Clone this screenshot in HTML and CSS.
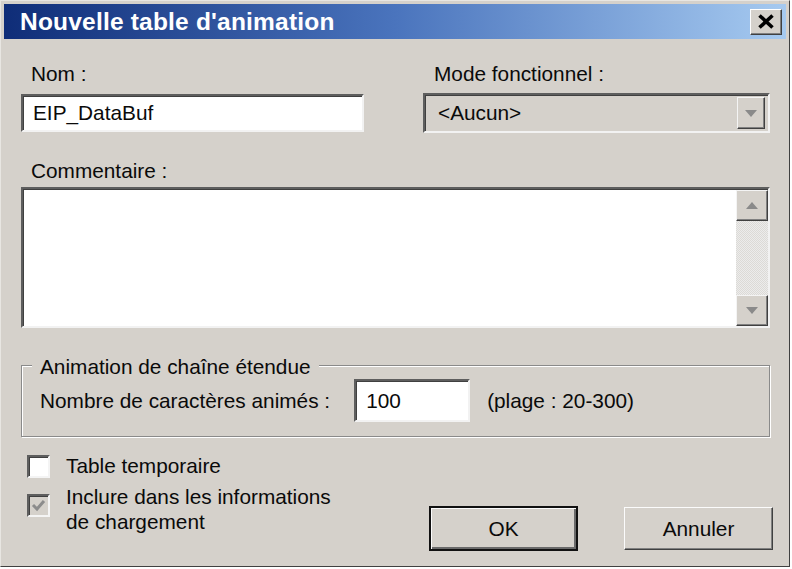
FILE: index.html
```html
<!DOCTYPE html>
<html lang="fr">
<head>
    <meta charset="UTF-8">
    <title>Nouvelle table d'animation</title>
    <link rel="stylesheet" href="styles.css">
</head>
<body>

<div class="dialog">
    <div class="titlebar">
        <span class="title">Nouvelle table d'animation</span>
        <button class="close">
            <svg width="18" height="15" viewBox="0 0 18 15">
                <path d="M2.5 1.5 L15.5 13.5 M15.5 1.5 L2.5 13.5" stroke="#000" stroke-width="3.6" fill="none"/>
            </svg>
        </button>
    </div>

    <div class="content">
        <div class="top-row">
            <div class="field">
                <label class="label">Nom :</label>
                <div class="textbox">EIP_DataBuf</div>
            </div>
            <div class="field">
                <label class="label">Mode fonctionnel :</label>
                <div class="combo">
                    <span class="combo-text">&lt;Aucun&gt;</span>
                    <span class="combo-btn">
                        <svg width="12" height="7" viewBox="0 0 12 7"><polygon points="0,0 12,0 6,7" fill="#8a8a8a"/></svg>
                    </span>
                </div>
            </div>
        </div>

        <div class="field comment">
            <label class="label">Commentaire :</label>
            <div class="memo">
                <div class="memo-text"></div>
                <div class="scrollbar">
                    <span class="scroll-btn">
                        <svg width="12" height="7" viewBox="0 0 12 7"><polygon points="0,7 12,7 6,0" fill="#8a8a8a"/></svg>
                    </span>
                    <span class="scroll-track"></span>
                    <span class="scroll-btn">
                        <svg width="12" height="7" viewBox="0 0 12 7"><polygon points="0,0 12,0 6,7" fill="#8a8a8a"/></svg>
                    </span>
                </div>
            </div>
        </div>

        <fieldset class="group">
            <legend>Animation de chaîne étendue</legend>
            <div class="group-row">
                <span>Nombre de caractères animés :</span>
                <div class="textbox count">100</div>
                <span>(plage : 20-300)</span>
            </div>
        </fieldset>

        <div class="bottom">
            <div class="checks">
                <div class="check-row">
                    <span class="checkbox"></span>
                    <span>Table temporaire</span>
                </div>
                <div class="check-row top">
                    <span class="checkbox disabled">
                        <svg width="15" height="13" viewBox="0 0 15 13"><path d="M2 6 L6 10 L13 2" stroke="#8c8c8c" stroke-width="3" fill="none"/></svg>
                    </span>
                    <span>Inclure dans les informations<br>de chargement</span>
                </div>
            </div>
            <div class="buttons">
                <button class="btn default">OK</button>
                <button class="btn">Annuler</button>
            </div>
        </div>
    </div>
</div>

</body>
</html>
```

FILE: styles.css
```css
body {
    margin: 0;
    background: #ffffff;
    font-family: "Liberation Sans", Arial, sans-serif;
    font-size: 20.8px;
    color: #0a0a0a;
}
.dialog {
    width: 790px;
    height: 567px;
    box-sizing: border-box;
    background: #d5d1cb;
    border: 1px solid #404040;
    border-top-color: #e8e6e2;
    border-left-color: #e8e6e2;
    padding: 3px;
}
.titlebar {
    height: 35px;
    display: flex;
    align-items: center;
    justify-content: space-between;
    padding: 0 4px 0 16px;
    background: linear-gradient(90deg, #0f2d78 0%, #4a74bd 50%, #a6caf0 100%);
}
.title {
    color: #fff;
    font-weight: bold;
    font-size: 24.5px;
    letter-spacing: 0.2px;
}
.close {
    width: 32px;
    height: 26px;
    padding: 0;
    display: flex;
    align-items: center;
    justify-content: center;
    background: #d5d1cb;
    border: 1px solid;
    border-color: #fff #404040 #404040 #fff;
    box-shadow: inset -1px -1px #808080;
}
.content {
    padding: 23px 16px 0 17px;
}
.label {
    display: block;
    line-height: 24px;
    padding-left: 10px;
    margin-bottom: 8px;
}
.top-row {
    display: grid;
    grid-template-columns: 343px 1fr;
    column-gap: 59px;
}
.top-row .field + .field .label {
    padding-left: 11px;
}
.textbox {
    height: 38px;
    box-sizing: border-box;
    background: #fff;
    border: 2px solid;
    border-color: #5e5e5e #f2f2f2 #f2f2f2 #5e5e5e;
    box-shadow: inset 1px 1px #404040;
    padding-left: 10px;
    line-height: 34px;
}
.combo {
    height: 40px;
    box-sizing: border-box;
    display: flex;
    align-items: center;
    justify-content: space-between;
    background: #d5d1cb;
    border: 2px solid;
    border-color: #5e5e5e #f2f2f2 #f2f2f2 #5e5e5e;
    box-shadow: inset 1px 1px #404040;
    padding: 0 3px 0 13px;
    margin-top: -1px;
}
.combo-btn, .scroll-btn {
    display: flex;
    align-items: center;
    justify-content: center;
    box-sizing: border-box;
    background: #d5d1cb;
    border: 1px solid;
    border-color: #f4f4f4 #404040 #404040 #f4f4f4;
    box-shadow: inset -1px -1px #808080;
}
.combo-btn {
    width: 28px;
    height: 32px;
}
.comment {
    margin-top: 26px;
}
.comment .label {
    margin-bottom: 4px;
}
.memo {
    height: 141px;
    box-sizing: border-box;
    display: flex;
    background: #fff;
    border: 2px solid;
    border-color: #5e5e5e #f2f2f2 #f2f2f2 #5e5e5e;
    box-shadow: inset 1px 1px #404040;
    padding: 1px 0 0 1px;
}
.memo-text {
    flex: 1;
}
.scrollbar {
    width: 32px;
    display: flex;
    flex-direction: column;
    background: repeating-conic-gradient(#ececec 0 25%, #dcdad6 0 50%) 0 0 / 2px 2px;
}
.scroll-btn {
    height: 31px;
}
.scroll-track {
    flex: 1;
}
.group {
    margin: 23px 0 0 0;
    padding: 0 0 14px 18px;
    border: 1px solid #8a8a8a;
    box-shadow: inset 1px 1px #fff, 1px 1px #fff;
    width: 749px;
    box-sizing: border-box;
}
.group legend {
    padding: 4px 8px 0 8px;
    margin-left: -8px;
    line-height: 24px;
    background: #d5d1cb;
}
.group-row {
    display: flex;
    align-items: center;
    height: 43px;
}
.textbox.count {
    width: 116px;
    height: 43px;
    line-height: 39px;
    margin: 0 17px 0 24px;
}
.bottom {
    display: flex;
    margin-top: 17px;
}
.checks {
    padding-left: 6px;
}
.check-row {
    display: flex;
    align-items: center;
    gap: 16px;
    line-height: 24px;
}
.check-row.top {
    align-items: flex-start;
    margin-top: 6px;
    line-height: 25px;
}
.checkbox {
    width: 23px;
    height: 23px;
    box-sizing: border-box;
    display: flex;
    align-items: center;
    justify-content: center;
    background: #fff;
    border: 2px solid;
    border-color: #5e5e5e #f4f4f4 #f4f4f4 #5e5e5e;
    box-shadow: inset 1px 1px #404040;
}
.checkbox.disabled {
    background: #d5d1cb;
    margin-top: 10px;
}
.buttons {
    display: flex;
    align-items: flex-start;
    gap: 46px;
    margin: 52px -3px 0 auto;
}
.btn {
    width: 149px;
    height: 43px;
    margin-top: 1px;
    font: inherit;
    color: #0a0a0a;
    background: #d5d1cb;
    border: 1px solid;
    border-color: #fbfbfb #404040 #404040 #fbfbfb;
    box-shadow: inset -1px -1px #808080;
    padding: 0;
}
.btn.default {
    height: 45px;
    margin-top: 0;
    border: 2px solid #111;
    box-shadow: inset 1px 1px #fbfbfb, inset -2px -2px #6a6a6a;
}
```
